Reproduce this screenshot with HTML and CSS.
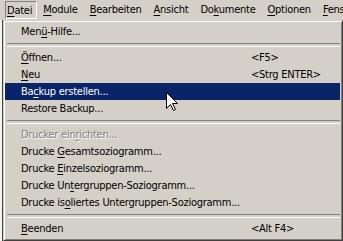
FILE: index.html
```html
<!DOCTYPE html>
<html lang="de">
<head>
    <meta charset="UTF-8">
    <title>Datei-Menü</title>
    <link rel="stylesheet" href="styles.css">
</head>
<body>
    <div class="menubar">
        <span class="top-item pressed"><u>D</u>atei</span>
        <span class="top-item"><u>M</u>odule</span>
        <span class="top-item"><u>B</u>earbeiten</span>
        <span class="top-item"><u>A</u>nsicht</span>
        <span class="top-item">Do<u>k</u>umente</span>
        <span class="top-item"><u>O</u>ptionen</span>
        <span class="top-item"><u>F</u>enster</span>
    </div>
    <div class="workspace">
        <div class="backdrop"></div>
        <div class="menu">
            <div class="item"><span class="label">Men<u>ü</u>-Hilfe...</span></div>
            <div class="sep"></div>
            <div class="item"><span class="label"><u>Ö</u>ffnen...</span><span class="key">&lt;F5&gt;</span></div>
            <div class="item"><span class="label"><u>N</u>eu</span><span class="key">&lt;Strg ENTER&gt;</span></div>
            <div class="item active"><span class="label">Ba<u>c</u>kup erstellen...</span></div>
            <div class="item"><span class="label">Restore Backup...</span></div>
            <div class="sep"></div>
            <div class="item disabled"><span class="label">Drucker ein<u>r</u>ichten...</span></div>
            <div class="item"><span class="label">Drucke <u>G</u>esamtsoziogramm...</span></div>
            <div class="item"><span class="label">Drucke <u>E</u>inzelsoziogramm...</span></div>
            <div class="item"><span class="label">Drucke Un<u>t</u>ergruppen-Soziogramm...</span></div>
            <div class="item"><span class="label">Drucke is<u>o</u>liertes Untergruppen-Soziogramm...</span></div>
            <div class="sep"></div>
            <div class="item"><span class="label"><u>B</u>eenden</span><span class="key">&lt;Alt F4&gt;</span></div>
        </div>
    </div>
    <svg class="cursor" width="13" height="20" viewBox="0 0 13 20">
        <polygon points="0.5,0.5 0.5,16.5 4.5,12.5 7.5,18.5 9.5,17.5 6.5,11.5 11.5,11.5" fill="#fff" stroke="#000" stroke-width="1"/>
    </svg>
</body>
</html>
```

FILE: styles.css
```css
*{
  box-sizing:border-box;
}
body{
  margin:0;
  width:343px;
  height:241px;
  overflow:hidden;
  background-color:#d4d0c8;
  font-family:'DejaVu Sans Condensed','DejaVu Sans',sans-serif;
  font-stretch:condensed;
  font-size:11px;
  letter-spacing:-0.25px;
  color:#000;
  position:relative;
}
u{
  text-decoration-thickness:1px;
  text-underline-offset:2px;
}
.menubar{
  display:flex;
  height:20px;
  padding-top:1px;
  overflow:hidden;
}
.top-item{
  height:18px;
  line-height:16px;
  padding:0 5px;
  border:1px solid transparent;
  white-space:nowrap;
}
.top-item.pressed{
  margin-left:5px;
  border-color:#808080 #fff #fff #808080;
  padding:1px 4px 0 1px;
}
.workspace{
  display:flex;
  height:221px;
}
.backdrop{
  width:3px;
  background-color:#f5f4ea;
  border-right:1px solid #404040;
}
.menu{
  flex:1;
  border-top:1px solid #d4d0c8;
  border-left:1px solid #d4d0c8;
  border-right:1px solid #404040;
  border-bottom:1px solid #404040;
  box-shadow:inset 1px 1px 0 #fff, inset -1px -1px 0 #808080;
  padding:2px 2px 3px 1px;
}
.item{
  display:flex;
  align-items:center;
  height:17px;
  padding-left:16px;
  white-space:nowrap;
}
.label{
  width:230px;
}
.item.active{
  background-color:#0a246a;
  color:#fff;
}
.item.disabled{
  color:#808080;
  text-shadow:1px 1px 0 #fff;
}
.sep{
  height:9px;
  padding-top:3px;
  margin-left:2px;
}
.sep::before{
  content:'';
  display:block;
  height:2px;
  border-top:1px solid #808080;
  border-bottom:1px solid #fff;
}
.cursor{
  position:absolute;
  left:166px;
  top:92px;
}
```
